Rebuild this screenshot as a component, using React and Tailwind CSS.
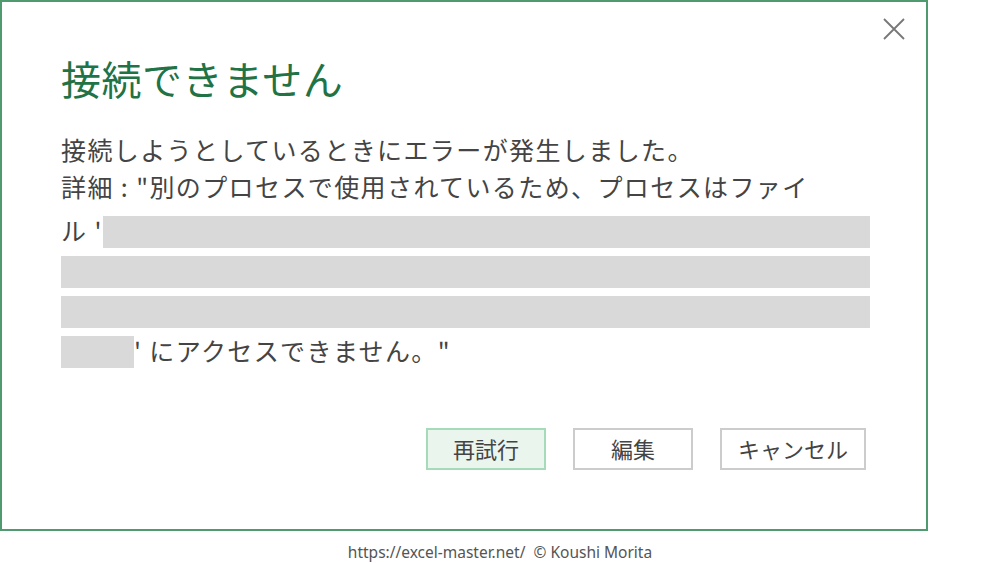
import React from 'react';

const JP = { fontFamily: '"Noto Sans CJK JP", "Noto Sans", sans-serif' };

function GrayBar({ className }) {
  return <span className={`inline-block h-[32px] bg-[#d9d9d9] align-middle ${className}`} />;
}

export default function App() {
  return (
    <div className="w-[1000px] h-[563px] bg-white relative overflow-hidden" style={JP}>
      {/* dialog */}
      <div className="w-[928px] h-[531px] border-2 border-[#4f9a6e] bg-white relative">
        <button className="absolute right-[20px] top-[15px] w-[24px] h-[24px] text-[#777]">
          <svg viewBox="0 0 24 24" className="w-full h-full" fill="none" stroke="currentColor" strokeWidth="1.8">
            <path d="M2 2 L22 22 M22 2 L2 22" />
          </svg>
        </button>

        <div className="pl-[59px] pt-[48px]">
          <h1 className="text-[40px] leading-[56px] text-[#217346] tracking-[0.5px]">接続できません</h1>

          <div className="mt-[26px] text-[25px] leading-[40px] text-[#444] tracking-[1.4px]">
            <div className="h-[40px]"><div className="-mt-[3px]">接続しようとしているときにエラーが発生しました。</div></div>
            <div className="h-[40px]"><div className="-mt-[3px]">詳細 : "別のプロセスで使用されているため、プロセスはファイ</div></div>
            <div className="flex items-center h-[40px] mt-[6px]">
              <span className="w-[42px] whitespace-nowrap -mt-[4px]">ル '</span>
              <GrayBar className="w-[767px]" />
            </div>
            <div className="flex items-center h-[40px]">
              <GrayBar className="w-[809px]" />
            </div>
            <div className="flex items-center h-[40px]">
              <GrayBar className="w-[809px]" />
            </div>
            <div className="flex items-center h-[40px]">
              <GrayBar className="w-[73px]" />
              <span className="-mt-[4px]">' にアクセスできません。"</span>
            </div>
          </div>
        </div>

        <div className="absolute left-[424px] top-[426px] flex gap-[27px] text-[22px] leading-[36px] text-[#444]">
          <button className="w-[120px] h-[42px] border-2 border-[#a6dbb9] bg-[#e9f5ed] pb-[2px]">再試行</button>
          <button className="w-[120px] h-[42px] border-2 border-[#cccccc] bg-white pb-[2px]">編集</button>
          <button className="w-[146px] h-[42px] border-2 border-[#cccccc] bg-white pb-[2px]">キャンセル</button>
        </div>
      </div>

      <div className="text-center text-[15.5px] leading-[20px] text-[#555] mt-[11px] w-[1000px]" style={{ fontFamily: '"Noto Sans", "Open Sans", sans-serif' }}>
        https://excel-master.net/&nbsp;&nbsp;© Koushi Morita
      </div>
    </div>
  );
}
